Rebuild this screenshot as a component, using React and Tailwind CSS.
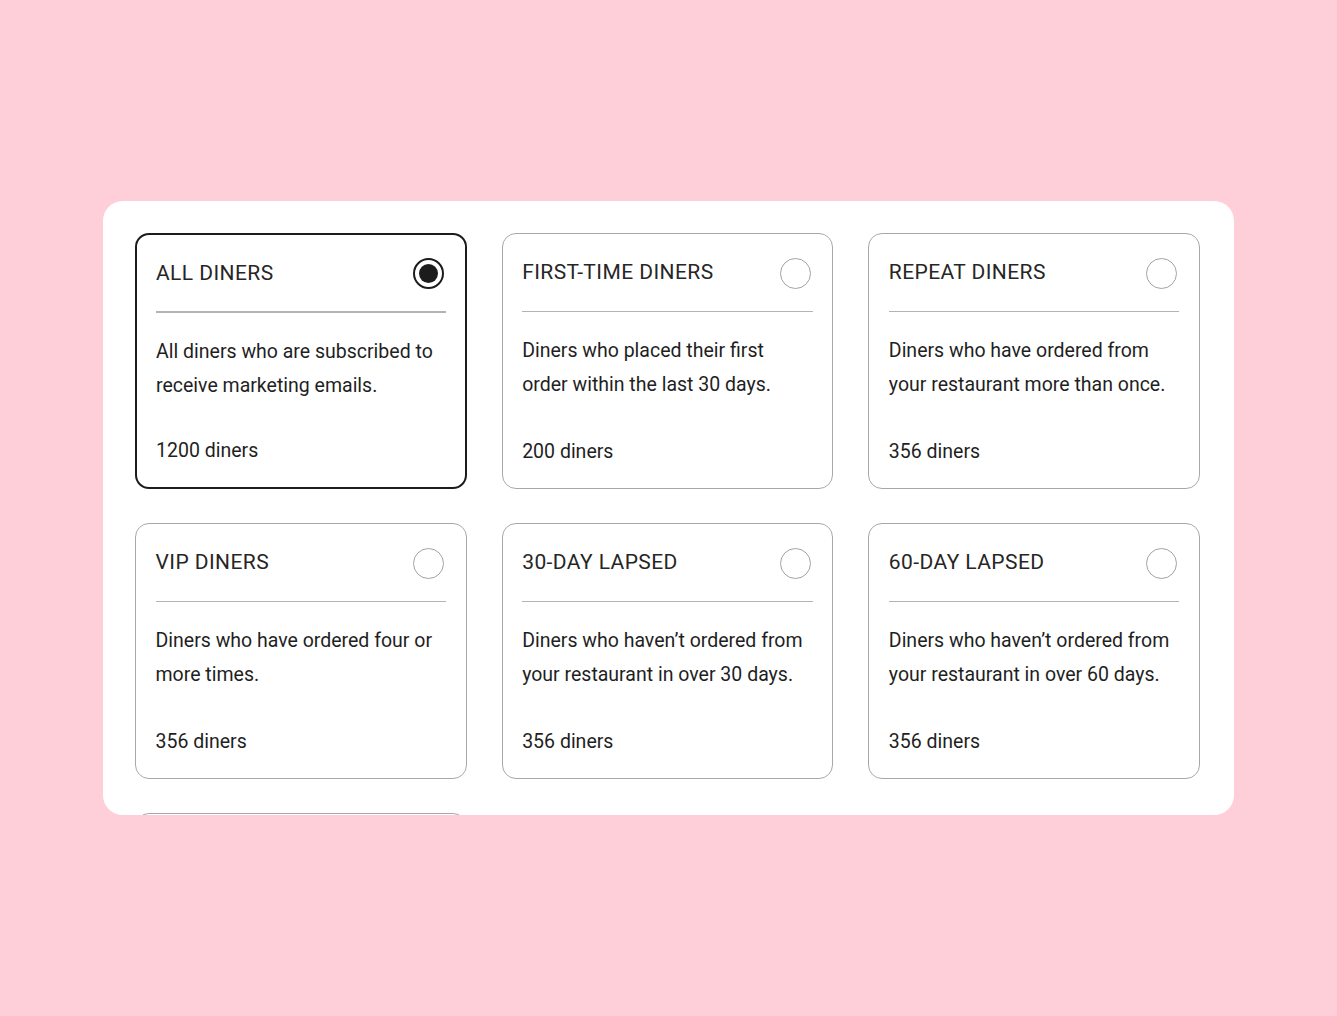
const SEGMENTS = [
  {
    id: "all",
    title: "All diners",
    description: "All diners who are subscribed to receive marketing emails.",
    count: 1200,
  },
  {
    id: "first-time",
    title: "First-time diners",
    description: "Diners who placed their first order within the last 30 days.",
    count: 200,
  },
  {
    id: "repeat",
    title: "Repeat diners",
    description: "Diners who have ordered from your restaurant more than once.",
    count: 356,
  },
  {
    id: "vip",
    title: "VIP diners",
    description: "Diners who have ordered four or more times.",
    count: 356,
  },
  {
    id: "lapsed-30",
    title: "30-day lapsed",
    description: "Diners who haven’t ordered from your restaurant in over 30 days.",
    count: 356,
  },
  {
    id: "lapsed-60",
    title: "60-day lapsed",
    description: "Diners who haven’t ordered from your restaurant in over 60 days.",
    count: 356,
  },
  {
    id: "lapsed-90",
    title: "90-day lapsed",
    description: "Diners who haven’t ordered from your restaurant in over 90 days.",
    count: 356,
  },
];

function Radio({ checked }) {
  return checked ? (
    <span className="mr-[2px] flex h-[31px] w-[31px] items-center justify-center rounded-full border-2 border-[#1c1c1c] bg-white">
      <span className="h-[19px] w-[19px] rounded-full bg-[#1c1c1c]" />
    </span>
  ) : (
    <span className="mr-[2px] h-[31px] w-[31px] rounded-full border-[1.5px] border-[#a3a3a3] bg-white" />
  );
}

function SegmentCard({ segment, selected }) {
  return (
    <div
      className={`flex h-[256px] flex-col rounded-[14px] bg-white ${
        selected
          ? "border-2 border-[#1c1c1c] px-[19px] pt-[23px]"
          : "border-[1.5px] border-[#a8a8a8] px-[19.5px] pt-[23.5px]"
      }`}
    >
      <div className="flex h-[31px] items-center justify-between">
        <span className="text-[21px] font-normal uppercase tracking-[0.02em] text-[#262626]">
          {segment.title}
        </span>
        <Radio checked={selected} />
      </div>
      <div className="mt-[22px] h-[1.5px] bg-[#b3b3b3]" />
      <p className="mt-[22px] text-[19.5px] leading-[34px] text-[#1f1f1f]">{segment.description}</p>
      <p className="mt-auto mb-[19px] text-[19.5px] leading-[34px] text-[#1f1f1f]">{segment.count} diners</p>
    </div>
  );
}

export default function App() {
  const selected = "all";

  return (
    <div
      className="flex min-h-screen items-center justify-center bg-[#ffcfd9]"
      style={{ fontFamily: "Roboto, 'Liberation Sans', sans-serif" }}
    >
      <div className="h-[614px] w-[1131px] overflow-hidden rounded-[20px] bg-white pt-[32px] pl-[32px] pr-[34px]">
        <div className="grid grid-cols-3 gap-x-[35px] gap-y-[34px]">
          {SEGMENTS.map((s) => (
            <SegmentCard key={s.id} segment={s} selected={s.id === selected} />
          ))}
        </div>
      </div>
    </div>
  );
}
